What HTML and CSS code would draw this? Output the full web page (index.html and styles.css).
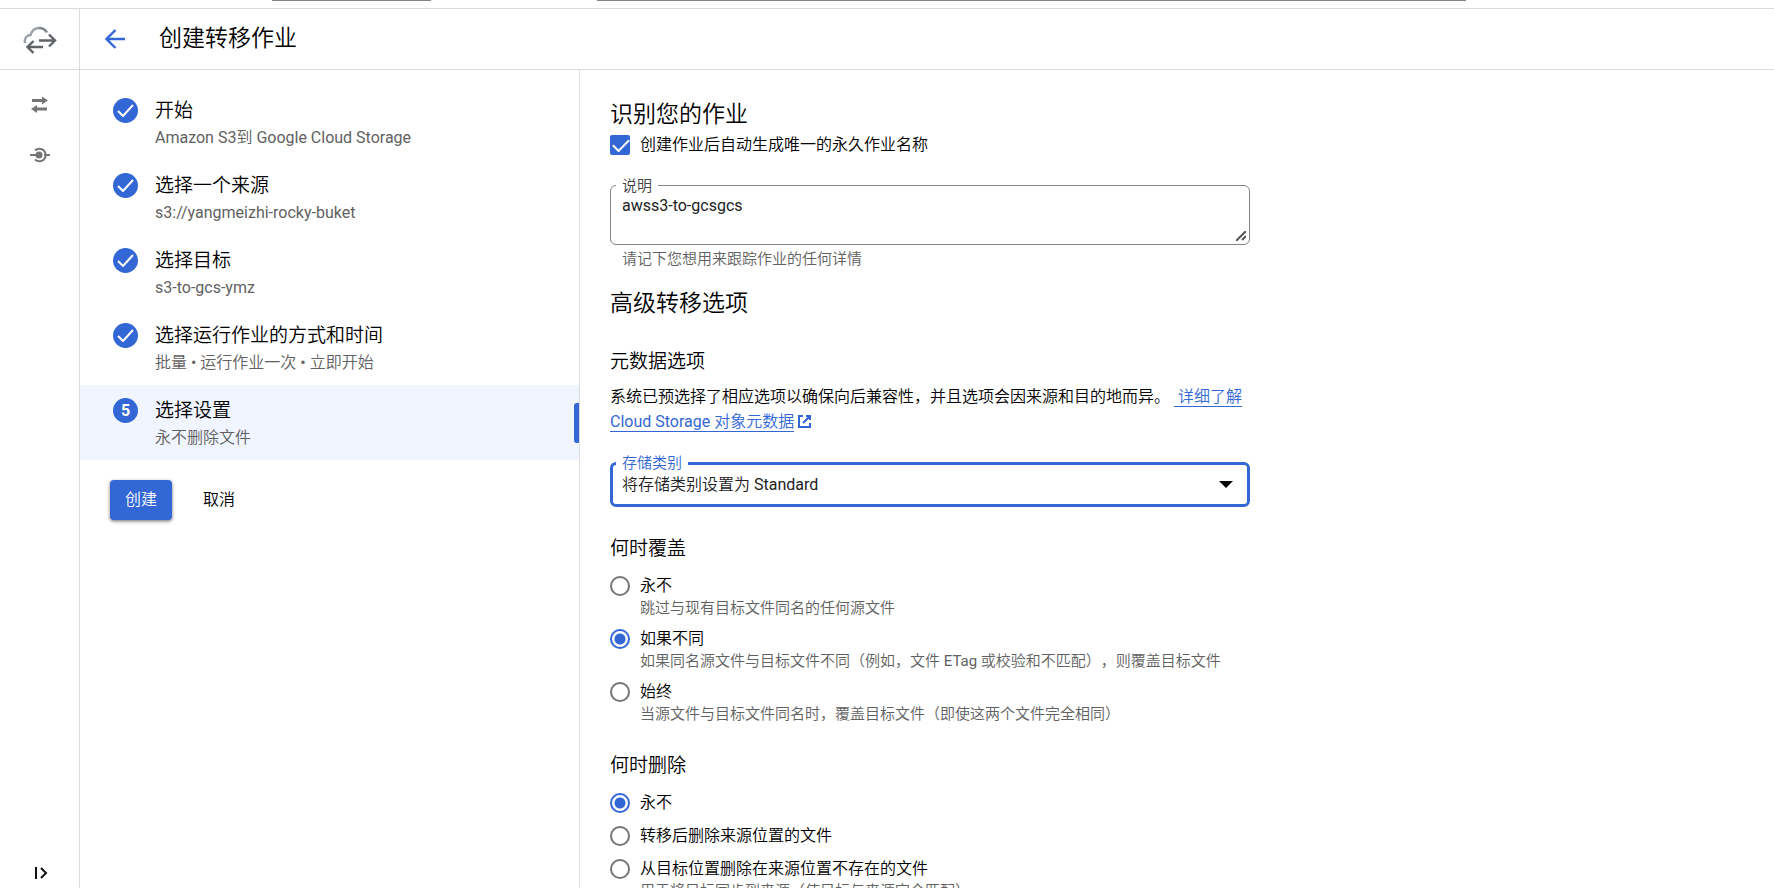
FILE: index.html
```html
<!DOCTYPE html>
<html lang="zh-CN">
<head>
<meta charset="utf-8">
<title>创建转移作业</title>
<link rel="stylesheet" href="styles.css">
</head>
<body>
<div class="app">
  <div class="topbar"><span class="topbar-project"></span><span class="topbar-search"></span></div>
  <header class="header">
    <div class="product">
      <svg width="34" height="28" viewBox="0 0 34 28" fill="none" stroke-width="2.400">
        <path stroke="#9aa0a6" d="M2 17C1 12 4 9 7.500 9C9 4 12 2 16 2"/>
        <path stroke="#80868b" d="M16 2C20 2 22.500 4 24 6.500"/>
        <path stroke="#5f6368" d="M16 14.500H32M26 8.500L32 14.500L26 20.500M20 21H4.500M10.500 15L4.500 21L10.500 27"/>
      </svg>
    </div>
    <div class="title-bar">
      <button class="icon-button" type="button" aria-label="返回">
        <svg width="20" height="20" viewBox="0 0 20 20" fill="none" stroke="#3367d6" stroke-width="2.400"><path d="M20 10H2M10.500 1L1.500 10L10.500 19"/></svg>
      </button>
      <h1 class="page-title">创建转移作业</h1>
    </div>
  </header>
  <div class="body">
    <nav class="rail">
      <a class="rail-link" href="#jobs" aria-label="转移作业">
        <svg width="18" height="18" viewBox="0 0 18 18" fill="#757575"><path d="M1 3H11V0.500L17 4.500L11 8.500V6H1ZM16 11.500H6V9L0 13L6 17V14.500H16Z"/></svg>
      </a>
      <a class="rail-link" href="#agents" aria-label="代理池">
        <svg width="20" height="16" viewBox="0 0 20 16" fill="none" stroke="#757575" stroke-width="2"><path d="M0 8H6M14 8H20M5 3.500A6.300 6.300 0 1 1 5 12.500"/><circle cx="9" cy="8" r="3.500" fill="#757575" stroke="none"/></svg>
      </a>
      <button class="icon-button rail-toggle" type="button" aria-label="展开">
        <svg width="13" height="12" viewBox="0 0 13 12" fill="none" stroke="#111" stroke-width="2"><path d="M1 0V12M6 1L11 6L6 11"/></svg>
      </button>
    </nav>
    <aside class="steps">
      <ol class="step-list">
        <li class="step">
          <span class="badge"><svg width="17" height="13" viewBox="0 0 17 13"><path d="M1 7L6 12L16 1"/></svg></span>
          <div class="step-text"><span class="step-title">开始</span><span class="step-note">Amazon S3到 Google Cloud Storage</span></div>
        </li>
        <li class="step">
          <span class="badge"><svg width="17" height="13" viewBox="0 0 17 13"><path d="M1 7L6 12L16 1"/></svg></span>
          <div class="step-text"><span class="step-title">选择一个来源</span><span class="step-note">s3://yangmeizhi-rocky-buket</span></div>
        </li>
        <li class="step">
          <span class="badge"><svg width="17" height="13" viewBox="0 0 17 13"><path d="M1 7L6 12L16 1"/></svg></span>
          <div class="step-text"><span class="step-title">选择目标</span><span class="step-note">s3-to-gcs-ymz</span></div>
        </li>
        <li class="step">
          <span class="badge"><svg width="17" height="13" viewBox="0 0 17 13"><path d="M1 7L6 12L16 1"/></svg></span>
          <div class="step-text"><span class="step-title">选择运行作业的方式和时间</span><span class="step-note">批量 • 运行作业一次 • 立即开始</span></div>
        </li>
        <li class="step step-current">
          <span class="badge">5</span>
          <div class="step-text"><span class="step-title">选择设置</span><span class="step-note">永不删除文件</span></div>
        </li>
      </ol>
      <div class="actions">
        <button class="button button-primary" type="button">创建</button>
        <button class="button" type="button">取消</button>
      </div>
    </aside>
    <main class="content">
      <form class="form">
        <h2 class="section-title">识别您的作业</h2>
        <label class="check-row"><input class="checkbox" type="checkbox" checked><span>创建作业后自动生成唯一的永久作业名称</span></label>
        <div class="field field-description">
          <label class="field-label" for="description">说明</label>
          <textarea class="textarea" id="description">awss3-to-gcsgcs</textarea>
          <svg class="grip" width="10" height="10" viewBox="0 0 10 10" fill="none" stroke="#555" stroke-width="2"><path d="M0 10L10 0M6 9L10 5"/></svg>
        </div>
        <p class="hint">请记下您想用来跟踪作业的任何详情</p>
        <h2 class="section-title section-advanced">高级转移选项</h2>
        <h3 class="group-title">元数据选项</h3>
        <p class="paragraph">系统已预选择了相应选项以确保向后兼容性，并且选项会因来源和目的地而异。 <a class="link" href="#metadata">&nbsp;详细了解 Cloud Storage 对象元数据</a><svg class="external" width="13" height="13" viewBox="0 0 13 13" fill="none" stroke="#3367d6" stroke-width="2"><path d="M5 1H1V12H12V8M8 1H12V5M12 1L5 8"/></svg></p>
        <div class="field field-focused">
          <label class="field-label" for="storage">存储类别</label>
          <select class="select" id="storage"><option>将存储类别设置为 Standard</option></select>
          <svg class="caret" width="14" height="7" viewBox="0 0 14 7"><path d="M0 0H14L7 7Z"/></svg>
        </div>
        <fieldset class="group">
          <legend class="group-title">何时覆盖</legend>
          <div class="options options-overwrite">
            <label class="option"><input class="radio" type="radio" name="overwrite"><span class="option-text"><span>永不</span><span class="option-note">跳过与现有目标文件同名的任何源文件</span></span></label>
            <label class="option"><input class="radio" type="radio" name="overwrite" checked><span class="option-text"><span>如果不同</span><span class="option-note">如果同名源文件与目标文件不同（例如，文件 ETag 或校验和不匹配），则覆盖目标文件</span></span></label>
            <label class="option"><input class="radio" type="radio" name="overwrite"><span class="option-text"><span>始终</span><span class="option-note">当源文件与目标文件同名时，覆盖目标文件（即使这两个文件完全相同）</span></span></label>
          </div>
        </fieldset>
        <fieldset class="group">
          <legend class="group-title">何时删除</legend>
          <div class="options options-delete">
            <label class="option"><input class="radio" type="radio" name="delete" checked><span class="option-text"><span>永不</span></span></label>
            <label class="option"><input class="radio" type="radio" name="delete"><span class="option-text"><span>转移后删除来源位置的文件</span></span></label>
            <label class="option"><input class="radio" type="radio" name="delete"><span class="option-text"><span>从目标位置删除在来源位置不存在的文件</span><span class="option-note">用于将目标同步到来源（使目标与来源完全匹配）</span></span></label>
          </div>
        </fieldset>
      </form>
    </main>
  </div>
</div>
</body>
</html>
```

FILE: styles.css
```css
* { box-sizing: border-box; }

body {
  margin: 0;
  background: #fff;
  color: #000;
  font: 16px/24px Roboto, "Noto Sans CJK SC DemiLight", "Noto Sans CJK SC Light", "Noto Sans CJK SC", sans-serif;
  text-spacing-trim: space-all;
}

h1, h2, h3, p, ol, fieldset, legend { margin: 0; padding: 0; border: 0; font-weight: 400; }
ol { list-style: none; }
button, textarea, select { font: inherit; color: inherit; }
svg { display: block; }

.app { display: flex; flex-direction: column; height: 100vh; overflow: hidden; }

.topbar {
  display: flex;
  flex: none;
  align-items: flex-start;
  gap: 166px;
  height: 9px;
  padding: 0 308px 0 272px;
  border-bottom: 1px solid #dadce0;
}
.topbar-project, .topbar-search { height: 1px; background: #80868b; }
.topbar-project { width: 159px; }
.topbar-search { flex: 1; }

.header { display: flex; flex: none; height: 61px; border-bottom: 1px solid #dadce0; }
.product {
  display: flex;
  align-items: center;
  justify-content: center;
  width: 80px;
  padding-top: 2px;
  border-right: 1px solid #dadce0;
}
.title-bar { display: flex; align-items: center; gap: 34px; padding-left: 25px; }
.page-title { font-size: 23px; line-height: 32px; }

.icon-button { display: flex; padding: 0; border: 0; background: none; cursor: pointer; }

.body { display: flex; flex: 1; min-height: 0; }

.rail {
  display: flex;
  flex: none;
  flex-direction: column;
  align-items: center;
  gap: 33px;
  width: 80px;
  padding: 26px 0 9px;
  border-right: 1px solid #dadce0;
}
.rail-toggle { margin-top: auto; padding-left: 4px; }

.steps { flex: none; width: 500px; border-right: 1px solid #dadce0; }
.step-list { padding-top: 15px; }
.step { display: flex; gap: 17px; height: 75px; padding: 13px 0 0 33px; }
.step-current { background: #f0f5ff; }
.step-current::after {
  content: "";
  width: 5px;
  height: 40px;
  margin: 5px 0 0 auto;
  border-radius: 3px 0 0 3px;
  background: #3367d6;
}
.badge {
  display: flex;
  flex: none;
  align-items: center;
  justify-content: center;
  width: 25px;
  height: 25px;
  border-radius: 50%;
  background: #3367d6;
  color: #fff;
  font-size: 16px;
  font-weight: 700;
}
.badge path { fill: none; stroke: #fff; stroke-width: 2; }
.step-text { display: flex; flex-direction: column; gap: 3px; }
.step-title { font-size: 19px; line-height: 25px; }
.step-note { line-height: 24px; color: #616161; }

.actions { display: flex; gap: 16px; padding: 20px 30px; }
.button { height: 40px; padding: 0 15px; border: 0; border-radius: 4px; background: none; cursor: pointer; }
.button-primary {
  background: #3367d6;
  color: #fff;
  box-shadow: 0 1px 3px rgba(0, 0, 0, .4), 0 2px 4px rgba(0, 0, 0, .2);
}

.content { flex: 1; min-width: 0; overflow: hidden; padding: 29px 30px 0; }
.form { max-width: 640px; }
.section-title { font-size: 23px; line-height: 32px; }
.section-advanced { margin-top: 17px; }
.section-advanced + .group-title { margin-top: 28px; }
.group-title { font-size: 19px; line-height: 28px; }

.check-row { display: flex; align-items: center; gap: 10px; margin-top: 2px; }
.checkbox {
  appearance: none;
  width: 20px;
  height: 20px;
  margin: 0;
  border-radius: 2px;
  background: #3367d6;
}
.checkbox::after {
  content: "";
  display: block;
  width: 14px;
  height: 7px;
  margin: 4px 0 0 3px;
  border: solid #fff;
  border-width: 0 0 2px 2px;
  transform: rotate(-45deg);
}

.field { position: relative; }
.field-description { margin-top: 28px; }
.field-label {
  position: absolute;
  top: -9px;
  left: 6px;
  padding: 0 6px;
  background: #fff;
  color: #444;
  font-size: 15px;
  line-height: 20px;
}
.textarea {
  display: block;
  width: 100%;
  height: 60px;
  padding: 8px 11px;
  border: 1px solid #80868b;
  border-radius: 6px;
  color: #212121;
  outline: 0;
  resize: none;
}
.grip { position: absolute; right: 4px; bottom: 4px; }
.hint { margin-top: 2px; padding-left: 12px; font-size: 15px; color: #616161; }

.paragraph { margin-top: 8px; line-height: 25px; }
.link { border-bottom: 1px solid #3367d6; color: #3367d6; text-decoration: none; }
.external { display: inline-block; margin-left: 4px; vertical-align: -1px; }

.field-focused { margin-top: 28px; }
.field-focused .field-label { color: #3367d6; }
.select {
  appearance: none;
  display: block;
  width: 100%;
  height: 45px;
  padding: 0 32px 0 9px;
  border: 3px solid #3367d6;
  border-radius: 6px;
  background: #fff;
  color: #212121;
  outline: 0;
}
.caret { position: absolute; top: 19px; right: 17px; }

.group { margin-top: 28px; }
.options { display: flex; flex-direction: column; padding-top: 11px; }
.options-overwrite { gap: 9px; }
.options-delete { gap: 9px; }
.option { display: flex; align-items: flex-start; gap: 10px; }
.option-text { display: flex; flex-direction: column; line-height: 24px; }
.option-note { font-size: 15px; line-height: 20px; color: #616161; }
.radio {
  appearance: none;
  flex: none;
  width: 20px;
  height: 20px;
  margin: 2px 0 0;
  border: 2px solid #757575;
  border-radius: 50%;
}
.radio:checked {
  border-color: #3367d6;
  background: radial-gradient(circle, #3367d6 5px, #fff 6px);
}
```
